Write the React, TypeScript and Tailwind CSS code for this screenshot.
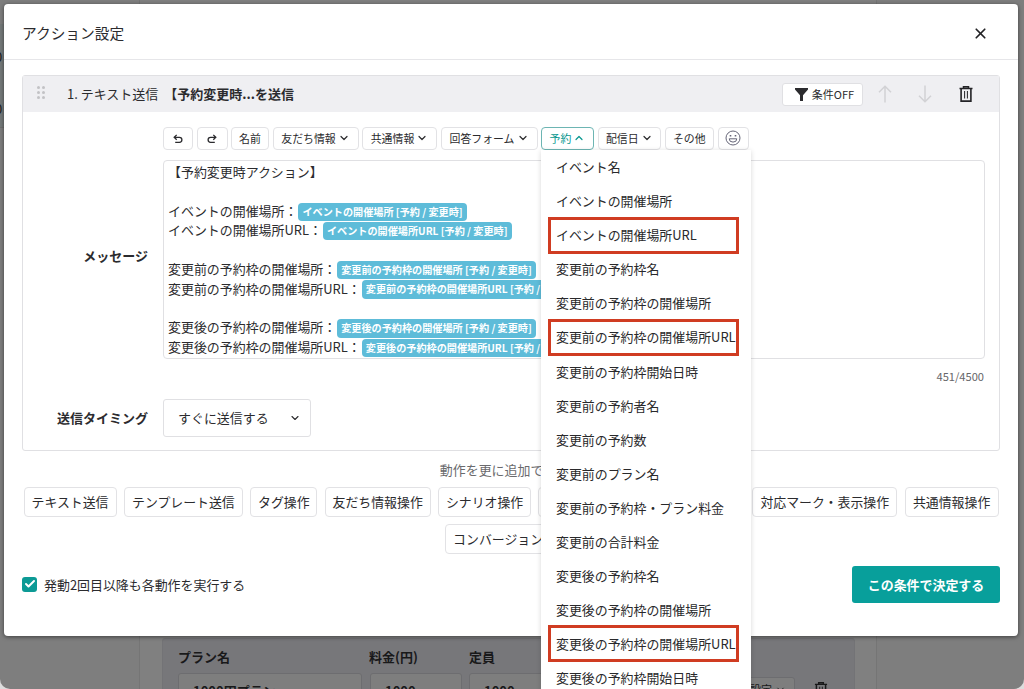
import { ReactNode } from "react";
import { Check, ChevronDown, ChevronUp, X } from "lucide-react";

const bookingItems = [
  { label: "イベント名" },
  { label: "イベントの開催場所" },
  { label: "イベントの開催場所URL", mark: "top-[-0.5px]" },
  { label: "変更前の予約枠名" },
  { label: "変更前の予約枠の開催場所" },
  { label: "変更前の予約枠の開催場所URL", mark: "top-[-1.2px]" },
  { label: "変更前の予約枠開始日時" },
  { label: "変更前の予約者名" },
  { label: "変更前の予約数" },
  { label: "変更前のプラン名" },
  { label: "変更前の予約枠・プラン料金" },
  { label: "変更前の合計料金" },
  { label: "変更後の予約枠名" },
  { label: "変更後の予約枠の開催場所" },
  { label: "変更後の予約枠の開催場所URL", mark: "top-[-2px]" },
  { label: "変更後の予約枠開始日時" },
];

const messageLines = [
  { text: "【予約変更時アクション】" },
  { text: "" },
  { text: "イベントの開催場所：", tag: "イベントの開催場所 [予約 / 変更時]" },
  { text: "イベントの開催場所URL：", tag: "イベントの開催場所URL [予約 / 変更時]" },
  { text: "" },
  { text: "変更前の予約枠の開催場所：", tag: "変更前の予約枠の開催場所 [予約 / 変更時]" },
  { text: "変更前の予約枠の開催場所URL：", tag: "変更前の予約枠の開催場所URL [予約 / 変更時]" },
  { text: "" },
  { text: "変更後の予約枠の開催場所：", tag: "変更後の予約枠の開催場所 [予約 / 変更時]" },
  { text: "変更後の予約枠の開催場所URL：", tag: "変更後の予約枠の開催場所URL [予約 / 変更時]" },
];

const actions = [
  { label: "テキスト送信", width: "w-[93px]" },
  { label: "テンプレート送信", width: "w-[119px]" },
  { label: "タグ操作", width: "w-[67px]" },
  { label: "友だち情報操作", width: "w-[106px]" },
  { label: "シナリオ操作", width: "w-[93px]" },
  { label: "リマインダ操作", width: "w-[106px]" },
  { label: "メニュー操作", width: "w-[93px]" },
  { label: "対応マーク・表示操作", width: "w-[145px]" },
  { label: "共通情報操作", width: "w-[94px]" },
];

function TrashIcon({ className }: { className?: string }) {
  return (
    <svg viewBox="0 0 14 16" fill="none" stroke="currentColor" className={className}>
      <path d="M0.5 2.5h13M4.5 2V0.8h5V2" strokeWidth="1.5" />
      <path d="M2.1 3v12.1h9.8V3" strokeWidth="1.6" />
      <path d="M5.6 5v7.5M8.4 5v7.5" strokeWidth="1" />
    </svg>
  );
}

function ArrowIcon({ down }: { down?: boolean }) {
  return (
    <svg
      viewBox="0 0 14 18"
      fill="none"
      stroke="currentColor"
      strokeWidth="1.5"
      className={down ? "h-[18px] w-[14px] rotate-180 text-[#d2d2d5]" : "h-[18px] w-[14px] text-[#d2d2d5]"}
    >
      <path d="M7 17.5V1.2M1 7.2l6-6 6 6" />
    </svg>
  );
}

function TurnIcon({ flip }: { flip?: boolean }) {
  return (
    <svg
      viewBox="0 0 10 10"
      fill="none"
      stroke="currentColor"
      strokeWidth="1.3"
      className={flip ? "mt-px size-[10px] -scale-x-100" : "mt-px size-[10px]"}
    >
      <path d="M3.7 0.9 1.2 3.3l2.5 2.4M1.3 3.3h5.1a2.5 2.5 0 0 1 0 5H2.2" />
    </svg>
  );
}

function SmileIcon() {
  return (
    <svg viewBox="0 0 16 16" fill="none" stroke="#666678" className="size-[16px]">
      <circle cx="8" cy="8" r="7" strokeWidth="1" />
      <path d="M4.2 8.8h7.6a3.8 3.3 0 0 1-7.6 0z" strokeWidth="1" />
      <path d="M5.5 5v1.6M10.5 5v1.6" strokeWidth="1.6" />
    </svg>
  );
}

function ToolButton({ width, active, children }: { width: string; active?: boolean; children: ReactNode }) {
  const color = active ? "border-[#6db5b3] text-[#07978f]" : "border-[#e2e2e5] text-[#2b2b2e]";
  return (
    <button
      className={`flex h-[23px] shrink-0 items-center justify-center gap-[2px] whitespace-nowrap rounded-[4px] border bg-white pb-px text-[10.9px] ${color} ${width}`}
    >
      {children}
    </button>
  );
}

// Page behind the dialog, already dimmed
function PlanTable() {
  return (
    <div className="flex h-full pl-[139px]">
      <div className="w-[738px] border-x border-[#757575] bg-[#808080] pl-[22px] pt-[638px]">
        <div className="h-[60px] w-[693px] rounded-t-[3px] border border-[#737376] bg-[#77777a] pl-[15px] pt-[8px] text-[#19191a]">
          <div className="flex h-[19px] items-center text-[13px] font-bold leading-none">
            <span className="w-[191px]">プラン名</span>
            <span className="w-[100px]">料金(円)</span>
            <span>定員</span>
          </div>
          <div className="mt-[7px] flex h-[30px] text-[13px] font-bold leading-[33px]">
            <div className="w-[184px] rounded-[3px] border border-[#6d6d70] bg-[#7e7e7e] pl-[14px]">1000円プラン</div>
            <div className="ml-[8px] w-[92px] rounded-[3px] border border-[#6d6d70] bg-[#7e7e7e] pl-[14px]">1000</div>
            <div className="ml-[7px] w-[92px] rounded-[3px] border border-[#6d6d70] bg-[#7e7e7e] pl-[14px]">1000</div>
            <div className="ml-[158px] mt-[4px] flex h-[24px] w-[76px] items-center justify-end gap-[3px] rounded-[3px] border border-[#6d6d70] bg-[#7e7e7e] pr-[8px] text-[11px] font-normal">
              設定
              <ChevronDown size={11} />
            </div>
            <TrashIcon className="ml-[19px] mt-[9px] h-[15px] w-[14px]" />
          </div>
        </div>
      </div>
    </div>
  );
}

function BookingMenu() {
  return (
    <ul className="absolute left-[541px] top-[149.6px] z-20 w-[210px] bg-white text-[12.93px] text-[#29292b] shadow-[0_1px_5px_rgba(0,0,0,0.16)]">
      {bookingItems.map((item) => (
        <li key={item.label} className="relative flex h-[34.1px] items-center whitespace-nowrap pl-[15px]">
          {item.label}
          {item.mark && (
            <span className={`absolute left-[6.5px] h-[37px] w-[191px] border-3 border-[#d03c22] ${item.mark}`} />
          )}
        </li>
      ))}
    </ul>
  );
}

function MessageBox() {
  return (
    <div className="h-[199px] w-[822px] overflow-hidden rounded-[4px] border border-[#e0e0e3] pl-[4px] pt-[1.7px] text-[12.95px] text-[#2b2b2e]">
      {messageLines.map((line, i) => (
        <div key={i} className="flex h-[19.45px] items-center whitespace-nowrap leading-none">
          <span>{line.text}</span>
          {line.tag && (
            <span className="ml-px mt-px flex h-[18.5px] items-center rounded-[4px] bg-[#5ebcd9] px-[4px] text-[10.15px] font-bold text-white">
              {line.tag}
            </span>
          )}
        </div>
      ))}
    </div>
  );
}

function ActionCard() {
  return (
    <section className="h-[376px] w-[978px] rounded-[3px] border border-[#e0e0e3]">
      <div className="flex h-[36px] items-center bg-[#efeff2] text-[13px] text-[#2b2b2e]">
        <div className="mb-[3px] ml-[14px] grid grid-cols-2 gap-[2px]">
          {[0, 1, 2, 3, 4, 5].map((n) => (
            <span key={n} className="size-[3px] rounded-full bg-[#c2c2c5]" />
          ))}
        </div>
        <span className="ml-[22px]">1. テキスト送信</span>
        <span className="ml-[6px] font-bold">【予約変更時...を送信</span>
        <button className="ml-auto flex h-[23px] w-[81px] items-center justify-center gap-[4px] rounded-[3px] border border-[#e0e0e3] bg-white pl-[4px] text-[11px]">
          <svg viewBox="0 0 13 13" fill="currentColor" className="size-[13px]">
            <path d="M0 0h13v1.5L8 7.2V13H5V7.2L0 1.5z" />
          </svg>
          条件OFF
        </button>
        <div className="ml-[15px] mr-[26px] flex items-center gap-[26px]">
          <ArrowIcon />
          <ArrowIcon down />
          <TrashIcon className="ml-px h-[16px] w-[14px] text-[#232326]" />
        </div>
      </div>

      <div className="flex pt-[15px]">
        <div className="flex w-[125px] shrink-0 items-center justify-end pt-[25px] text-[13px] font-bold">メッセージ</div>
        <div className="ml-[15px]">
          <div className="flex gap-[3.5px]">
            <ToolButton width="w-[30px]"><TurnIcon /></ToolButton>
            <ToolButton width="w-[31px]"><TurnIcon flip /></ToolButton>
            <ToolButton width="w-[38px]">名前</ToolButton>
            <ToolButton width="w-[86px]">友だち情報<ChevronDown size={12} strokeWidth={2.4} /></ToolButton>
            <ToolButton width="w-[75px]">共通情報<ChevronDown size={12} strokeWidth={2.4} /></ToolButton>
            <ToolButton width="w-[97px]">回答フォーム<ChevronDown size={12} strokeWidth={2.4} /></ToolButton>
            <ToolButton width="w-[53px]" active>予約<ChevronUp size={12} strokeWidth={2.4} /></ToolButton>
            <ToolButton width="w-[63.5px]">配信日<ChevronDown size={12} strokeWidth={2.4} /></ToolButton>
            <ToolButton width="w-[49.5px]">その他</ToolButton>
            <ToolButton width="w-[31px]"><SmileIcon /></ToolButton>
          </div>
          <div className="mt-[10px]">
            <MessageBox />
          </div>
        </div>
      </div>
      <p className="mt-[9px] h-[16px] pr-[15px] text-right text-[11.1px] leading-[16px] text-[#666669]">451/4500</p>

      <div className="mt-[15px] flex items-center">
        <div className="w-[125px] text-right text-[13px] font-bold">送信タイミング</div>
        <button className="ml-[15px] flex h-[38px] w-[148px] items-center justify-between rounded-[3px] border border-[#e0e0e3] pb-px pl-[14px] pr-[9px] text-[12.95px]">
          すぐに送信する
          <ChevronDown size={12} strokeWidth={2.2} />
        </button>
      </div>
    </section>
  );
}

export default function App() {
  return (
    <div className="relative h-[689px] w-[1024px] overflow-hidden bg-[#dddddd] font-['Noto_Sans_CJK_JP',sans-serif] text-[#2b2b2e]">
      <div className="h-full overflow-hidden rounded-b-[10px] bg-[#7e7e7e]">
        <PlanTable />
      </div>

      {/* edge of the calendar column that sticks out left of the dialog */}
      <div className="absolute left-0 top-[24px] h-[104px] w-[4px] overflow-hidden border-b border-[#707070] bg-[#757a7a] text-[13px] text-[#1c1c1c]">
        <span className="absolute left-[-5px] top-[23px]">0</span>
        <span className="absolute left-[-5px] top-[75px]">0</span>
      </div>

      <div className="absolute left-[4px] top-[4px] h-[632.4px] w-[1014px] rounded-[4px] bg-white shadow-[0_1px_4px_rgba(0,0,0,0.5)]">
        <header className="flex h-[56px] items-center justify-between border-b border-[#e6e6e9] pb-[2px] pl-[18px] pr-[29px] pt-[6px]">
          <h1 className="text-[14.7px]">アクション設定</h1>
          <X size={17} strokeWidth={2.4} className="text-[#222225]" />
        </header>

        <div className="pl-[18px] pt-[15px]">
          <ActionCard />
          <p className="mt-[9px] w-[978px] text-center text-[12.95px] leading-[19px] text-[#6a6a6d]">動作を更に追加できます</p>
          <div className="ml-[1.5px] mt-[8px] flex gap-[7.4px]">
            {actions.map((action) => (
              <button
                key={action.label}
                className={`flex h-[30px] shrink-0 items-center justify-center whitespace-nowrap rounded-[4px] border border-[#e2e2e5] pb-px text-[12.9px] ${action.width}`}
              >
                {action.label}
              </button>
            ))}
          </div>
          <div className="mt-[7px] flex w-[978px] justify-center">
            <button className="h-[30px] w-[133px] rounded-[4px] border border-[#e2e2e5] text-[12.9px]">コンバージョン操作</button>
          </div>
          <div className="mt-[12px] flex w-[978px] items-center justify-between">
            <label className="flex items-center gap-[7px] text-[12.95px]">
              <span className="flex size-[15px] items-center justify-center rounded-[3px] bg-[#0c9a95] text-white">
                <Check size={12} strokeWidth={4} />
              </span>
              発動2回目以降も各動作を実行する
            </label>
            <button className="h-[37px] w-[148px] rounded-[3px] bg-[#089f9b] text-[12.95px] font-bold text-white">
              この条件で決定する
            </button>
          </div>
        </div>
      </div>

      <BookingMenu />
    </div>
  );
}
